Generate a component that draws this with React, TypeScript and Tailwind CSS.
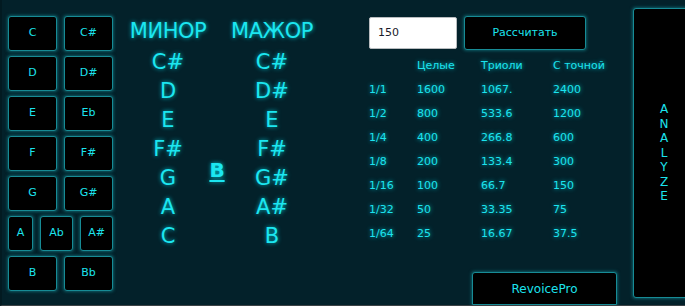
import React from "react";

const glow = "[text-shadow:0_0_4px_rgba(0,240,255,0.75)]";
const btn =
  "bg-black border border-[#178b95] rounded-[3px] shadow-[0_0_3px_1px_rgba(20,140,150,0.55)] flex items-center justify-center text-[#1ce3ee] text-[11px]";

function KeyBtn({ label, w = "w-[49px]" }: { label: string; w?: string }) {
  return <div className={`${btn} ${w} h-[35px]`}>{label}</div>;
}

const minor = ["C#", "D", "E", "F#", "G", "A", "C"];
const major = ["C#", "D#", "E", "F#", "G#", "A#", "B"];

const rows = [
  ["1/1", "1600", "1067.", "2400"],
  ["1/2", "800", "533.6", "1200"],
  ["1/4", "400", "266.8", "600"],
  ["1/8", "200", "133.4", "300"],
  ["1/16", "100", "66.7", "150"],
  ["1/32", "50", "33.35", "75"],
  ["1/64", "25", "16.67", "37.5"],
];

export default function App() {
  return (
    <div
      className="w-[685px] h-[306px] overflow-hidden bg-[#03212a] border-b border-[#3c4245] border-l-2 border-l-[#021a21] flex text-[#1ce3ee]"
      style={{ fontFamily: '"DejaVu Sans", Verdana, sans-serif' }}
    >
      {/* left keys */}
      <div className="w-[118px] shrink-0 pt-[16px] pl-[6px] flex flex-col gap-[5px]">
        {[
          ["C", "C#"],
          ["D", "D#"],
          ["E", "Eb"],
          ["F", "F#"],
          ["G", "G#"],
        ].map(([a, b]) => (
          <div key={a} className="flex gap-[7px]">
            <KeyBtn label={a} />
            <KeyBtn label={b} />
          </div>
        ))}
        <div className="flex gap-[7px]">
          <KeyBtn label="A" w="w-[25px]" />
          <KeyBtn label="Ab" w="w-[33px]" />
          <KeyBtn label="A#" w="w-[33px]" />
        </div>
        <div className="flex gap-[7px]">
          <KeyBtn label="B" />
          <KeyBtn label="Bb" />
        </div>
      </div>

      {/* middle */}
      <div className={`flex shrink-0 pt-[19px] pl-[4px] ${glow} text-[#1ce6f0]`}>
        <div className="w-[88px] flex flex-col items-center">
          <div className="text-[21px] leading-[24px] tracking-[-0.5px]">МИНОР</div>
          <div className="mt-[5px] flex flex-col items-center">
            {minor.map((n, i) => (
              <div key={i} className="text-[21px] leading-[29px] h-[29px]">
                {n}
              </div>
            ))}
          </div>
        </div>
        <div className="w-[10px] flex justify-center pt-[140px]">
          <div className="text-[20px] font-bold underline underline-offset-[3px] decoration-2 leading-[22px]">B</div>
        </div>
        <div className="w-[100px] flex flex-col items-center">
          <div className="text-[21px] leading-[24px] tracking-[-0.5px]">МАЖОР</div>
          <div className="mt-[5px] flex flex-col items-center">
            {major.map((n, i) => (
              <div key={i} className="text-[21px] leading-[29px] h-[29px]">
                {n}
              </div>
            ))}
          </div>
        </div>
      </div>

      {/* right */}
      <div className="w-[248px] shrink-0 ml-[47px] flex flex-col">
        <div className="flex items-center gap-[7px] pt-[16px] h-[50px]">
          <div className="w-[88px] h-[32px] bg-white border border-[#b8bcbf] rounded-[2px] flex items-center pl-[8px] text-[11px] text-[#1a1a2a]">
            150
          </div>
          <div className={`${btn} w-[122px] h-[34px]`}>Рассчитать</div>
        </div>
        <div className={`mt-[4px] text-[11px] text-[#1ce3ee] ${glow}`}>
          <div className="flex h-[24px] items-center">
            <div className="w-[48px]" />
            <div className="w-[64px]">Целые</div>
            <div className="w-[72px]">Триоли</div>
            <div>С точной</div>
          </div>
          {rows.map((r) => (
            <div key={r[0]} className="flex h-[24px] items-center">
              <div className="w-[48px]">{r[0]}</div>
              <div className="w-[64px]">{r[1]}</div>
              <div className="w-[72px]">{r[2]}</div>
              <div>{r[3]}</div>
            </div>
          ))}
        </div>
        <div className="mt-auto flex justify-end">
          <div className={`${btn} w-[145px] h-[33px] text-[12px] rounded-b-none`}>RevoicePro</div>
        </div>
      </div>

      {/* analyze */}
      <div className="ml-[16px] pt-[8px] shrink-0">
        <div className={`${btn} w-[62px] h-[290px] flex-col text-[12px] leading-[14.5px]`}>
          {"ANALYZE".split("").map((c, i) => (
            <span key={i}>{c}</span>
          ))}
        </div>
      </div>
    </div>
  );
}
